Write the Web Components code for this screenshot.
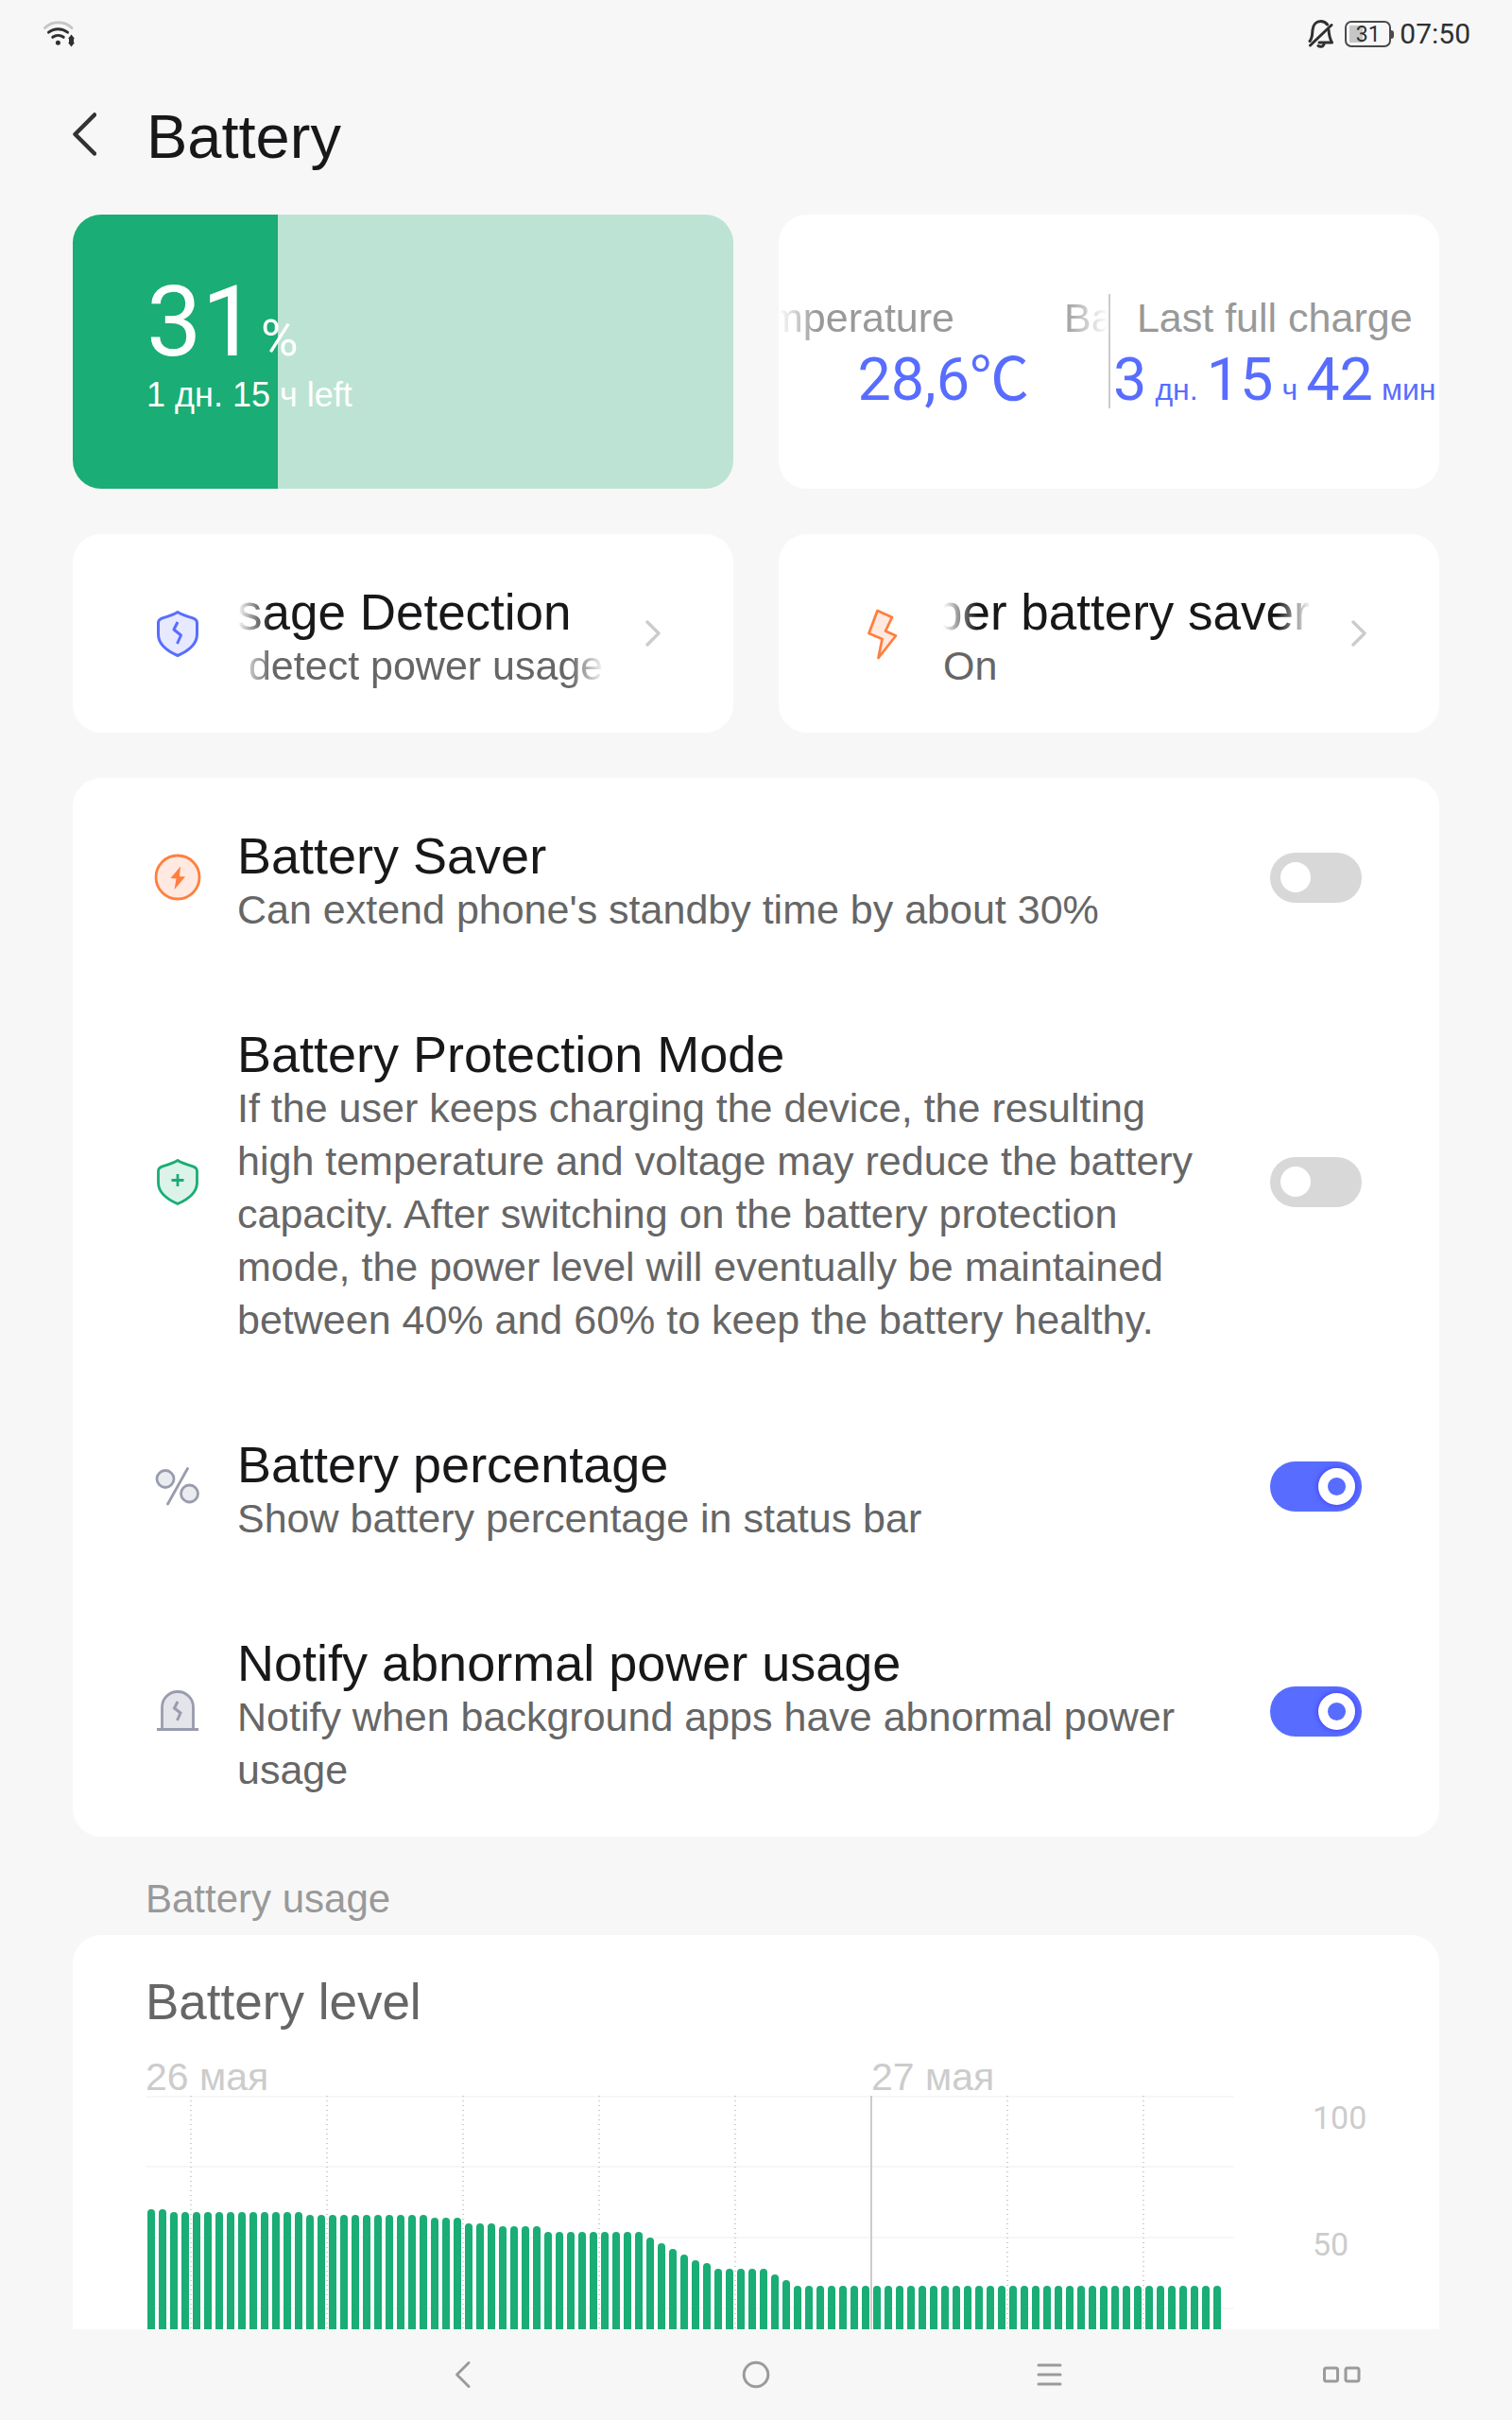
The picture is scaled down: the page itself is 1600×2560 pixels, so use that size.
<!DOCTYPE html>
<html lang="en">
<head>
<meta charset="utf-8">
<title>Battery</title>
<style>
  html, body { margin: 0; }
  body {
    background: #f7f7f7;
    color: #18181a;
    font-family: "Liberation Sans", "Noto Sans CJK SC", sans-serif;
  }
</style>
</head>
<body>
<battery-page></battery-page>
<script>
const define = (name, html, setup) => {
  const template = document.createElement('template');
  template.innerHTML = html;
  customElements.define(name, class extends HTMLElement {
    constructor() {
      super();
      this.attachShadow({ mode: 'open' }).append(template.content.cloneNode(true));
    }
    connectedCallback() {
      if (setup && !this.ready) { this.ready = true; setup(this, this.shadowRoot); }
    }
  });
};

const SHIELD = 'M28 5.5c5 3.2 11 4.8 16 6.3 3 1 4.5 2.2 4.5 5V29c0 11-9 17.5-20.5 22.5C16.5 46.5 7.5 40 7.5 29V16.8c0-2.8 1.5-4 4.5-5C17 10.3 23 8.7 28 5.5z';
const ICONS = {
  'shield-blue': `<g stroke="#586dff" stroke-width="3" stroke-linejoin="round"><path fill="#e6e9ff" d="${SHIELD}"/><path fill="none" d="M28 16l-4 8 7.5 6-4 9"/></g>`,
  'bolt': '<path d="M21.5 4l15.500 7-7 14.5 11 5L22.5 54l4-20-14-6z" fill="#ffe9e0" stroke="#ff7f3f" stroke-width="2.8" stroke-linejoin="round"/>',
  'saver': '<circle cx="28" cy="28" r="23" fill="#ffe9e0" stroke="#ff7f3f" stroke-width="2.8"/><path fill="#ff7f3f" d="M31 16.500L20.500 29l6 .5-2 11.500L36 27.500l-6-.5z"/>',
  'shield-green': `<g stroke="#1aad75" stroke-width="2.8" stroke-linejoin="round"><path fill="#dcf3ea" d="${SHIELD}"/><path fill="none" d="M28 20v13M21.5 26.500h13"/></g>`,
  'percent': '<g fill="#ebecef" stroke="#999cae" stroke-width="2.8" stroke-linecap="round"><circle cx="15" cy="20.500" r="9"/><circle cx="40.500" cy="36" r="9"/><path d="M38.500 9.500L17.500 47"/></g>',
  'alarm': '<g fill="#e4e5ea" stroke="#999cae" stroke-width="2.8"><path d="M11.500 47V24a16.500 16.500 0 0 1 33 0v23"/><path stroke-width="3" d="M6 47.500h44"/><path fill="none" stroke-width="3" d="M28 18l-3.500 7 6.500 5-3.500 8"/></g>'
};

define('line-icon', `
  <style>:host { display: block; flex: none; width: 56px; height: 56px; } svg { display: block; }</style>
  <svg width="56" height="56" viewBox="0 0 56 56" aria-hidden="true"></svg>`,
  (el, root) => { root.querySelector('svg').innerHTML = ICONS[el.getAttribute('name')]; });

define('status-bar', `
  <style>
    :host { display: flex; align-items: center; justify-content: space-between; height: 44px; padding: 14px 44px; color: #303030; font-family: Roboto, sans-serif; }
    .right { display: flex; align-items: center; gap: 6px; font-size: 30px; line-height: 32px; }
    .pill { display: flex; align-items: center; }
    .cell { box-sizing: border-box; width: 49px; height: 28px; border: 2px solid #4a4a4a; border-radius: 7px; text-align: center; font-size: 23px; line-height: 26px;
      background: linear-gradient(#c6c6c6, #c6c6c6) 3px center / 14px 18px no-repeat; }
    .tip { width: 3px; height: 9px; background: #4a4a4a; border-radius: 0 3px 3px 0; }
    .bell { margin-right: 6px; }
    svg { display: block; }
  </style>
  <svg width="36" height="28" viewBox="0 0 36 28" fill="none" stroke-width="3" stroke-linecap="round" aria-label="Wi-Fi">
    <g transform="translate(2 0)">
      <path stroke="#c6c6c6" d="M1.5 7.5A20.5 20.5 0 0 1 30 7.5"/>
      <path stroke="#303030" d="M5.5 12.2A16 16 0 0 1 25.500 12.2"/>
      <path stroke="#303030" d="M9.8 17.3A9.5 9.5 0 0 1 21.2 17.3"/>
      <circle cx="15.4" cy="23.2" r="2.5" fill="#303030"/>
      <path fill="#303030" d="M29.500 14.500l3.500 4.500h-1v4h1l-3.500 4.500-3.500-4.500h1v-4h-1z"/>
    </g>
  </svg>
  <div class="right">
    <svg class="bell" width="27" height="30" viewBox="0 0 27 30" fill="none" stroke="#303030" stroke-width="3" stroke-linecap="round" stroke-linejoin="round">
      <path d="M2 22.500C5 19 4.500 15 5 10.500C5.500 5 9 1.500 13.500 1.500C16.500 1.500 19 2.800 20.600 5M22 10.500c.3 5 1 9 3.500 13.500H12"/>
      <path d="M2.500 27L25 5.500"/><path d="M11 27.500c2 1.500 5 1 6-1.500"/>
    </svg>
    <div class="pill"><div class="cell">31</div><div class="tip"></div></div>
    <time>07:50</time>
  </div>`);

define('page-header', `
  <style>
    :host { display: flex; align-items: center; gap: 53px; height: 146px; padding: 0 77px 9px; }
    button { border: 0; padding: 0 0 6px; background: none; display: block; }
    svg { display: block; }
    h1 { margin: 0; font-size: 65px; line-height: 76px; font-weight: 400; }
  </style>
  <button aria-label="Back"><svg width="25" height="46" viewBox="0 0 25 46" fill="none" stroke="#333336" stroke-width="4.5" stroke-linecap="round" stroke-linejoin="round"><path d="M23 2.500L2.500 23 23 43.500"/></svg></button>
  <h1><slot></slot></h1>`);

define('level-card', `
  <style>
    :host { display: block; box-sizing: border-box; height: 290px; padding: 62px 78px 0; border-radius: 30px; color: #fff;
      background: linear-gradient(90deg, #1aad75 31%, #bde3d5 31%); }
    .row { display: flex; align-items: baseline; gap: 4px; font-family: Roboto, sans-serif; }
    .num { font-size: 104px; line-height: 104px; }
    .unit { font-size: 54px; line-height: 54px; }
    .left { font-size: 36px; line-height: 50px; }
  </style>
  <div class="row"><span class="num">31</span><span class="unit">%</span></div>
  <div class="left">1 дн. 15 ч left</div>`);

define('stats-card', `
  <style>
    :host { display: grid; grid-template-columns: 1fr 2px 1fr; align-items: start; box-sizing: border-box; height: 290px; padding-top: 84px; border-radius: 30px; background: #fff; overflow: hidden; }
    .col { min-width: 0; }
    .rule { height: 121px; background: #ccc; }
    .label { color: #999; font-size: 43px; line-height: 50px; text-align: center; white-space: nowrap; }
    .scroll { display: flex; gap: 116px; overflow: hidden; text-indent: -10px; -webkit-mask-image: linear-gradient(90deg, transparent, #000 40px, #000 calc(100% - 48px), transparent); }
    .scroll span + span { text-indent: 0; }
    .value { display: flex; justify-content: center; align-items: baseline; gap: 9px; margin-top: 4px; color: #586dff; font-size: 32px; line-height: 74px; white-space: nowrap; }
    .num { font-family: Roboto, "Noto Sans CJK SC", sans-serif; font-size: 63px; }
  </style>
  <div class="col">
    <div class="label scroll"><span>mperature</span><span>Ba</span></div>
    <div class="value"><span class="num">28,6℃</span></div>
  </div>
  <div class="rule"></div>
  <div class="col">
    <div class="label">Last full charge</div>
    <div class="value"><span class="num">3</span><span>дн.</span><span class="num">15</span><span>ч</span><span class="num">42</span><span>мин</span></div>
  </div>`);

define('link-card', `
  <style>
    :host { display: block; }
    a { display: flex; align-items: center; box-sizing: border-box; height: 210px; padding: 0 77px 0 83px; border-radius: 30px; background: #fff; color: inherit; text-decoration: none; }
    .text { flex: 1; min-width: 0; margin: 0 43px 0 35px; padding-top: 11px; }
    .title, .note { display: block; overflow: hidden; white-space: pre; }
    .title { font-size: 53px; line-height: 57px; padding-bottom: 4px; margin-bottom: -4px; }
    .note { color: #666; font-size: 43px; line-height: 56px; }
    .fade { -webkit-mask-image: linear-gradient(90deg, transparent, #000 36px, #000 calc(100% - 36px), transparent); }
    :host([scrolled]) .title { text-indent: -9px; }
    svg { display: block; }
  </style>
  <a href="#">
    <slot name="icon"></slot>
    <span class="text"><span class="title fade"><slot></slot></span><span class="note"></span></span>
    <svg width="16" height="28" viewBox="0 0 16 28" fill="none" stroke="#ccc" stroke-width="3.4" stroke-linecap="round" stroke-linejoin="round"><path d="M2 2l12 12L2 26"/></svg>
  </a>`,
  (el, root) => {
    const note = root.querySelector('.note');
    note.textContent = el.getAttribute('note');
    if (el.hasAttribute('long-note')) note.classList.add('fade');
  });

define('setting-row', `
  <style>
    :host { display: flex; align-items: center; padding: 0 82px 0 83px; }
    .text { flex: 1; margin: 0 64px 0 35px; padding: 54px 0 43px; }
    label { display: block; font-size: 54px; line-height: 57px; }
    p { margin: 0; color: #666; font-size: 43px; line-height: 56px; }
    input { appearance: none; flex: none; display: flex; align-items: center; box-sizing: border-box; width: 97px; height: 53px; margin: 0; padding: 0 11px; border-radius: 27px; background: #d8d8d8; }
    input::before { content: ""; width: 32px; height: 32px; border-radius: 50%; background: #fff; }
    input:checked { justify-content: flex-end; padding: 0 7px; background: #586dff; }
    input:checked::before { box-sizing: border-box; width: 39px; height: 39px; border: 10px solid #fff; background: #586dff; box-shadow: 0 0 6px #4033ff; }
  </style>
  <slot name="icon"></slot>
  <div class="text"><label for="toggle"></label><p id="note"><slot></slot></p></div>
  <input id="toggle" type="checkbox" role="switch" aria-describedby="note">`,
  (el, root) => {
    root.querySelector('label').textContent = el.getAttribute('heading');
    root.querySelector('input').checked = el.hasAttribute('on');
  });

define('level-chart', `
  <style>
    :host { display: block; padding: 42px 77px 60px; border-radius: 30px; background: #fff; }
    h2 { margin: 0 0 31px; color: #666; font-size: 53px; line-height: 57px; font-weight: 400; }
    .body { display: flex; gap: 83px; color: #ccc; }
    .plot { flex: 1; }
    .dates { display: grid; grid-template-columns: 2fr 1fr; font-size: 41px; line-height: 40px; }
    svg { display: block; width: 100%; height: 300px; }
    .axis { display: flex; flex-direction: column; gap: 94px; width: 57px; padding-top: 43px; font: 34px/40px Roboto, sans-serif; }
  </style>
  <h2>Battery level</h2>
  <div class="body">
    <div class="plot">
      <div class="dates"><span>26 мая</span><span>27 мая</span></div>
      <svg viewBox="0 0 1152 300" preserveAspectRatio="none" role="img" aria-label="Battery level"></svg>
    </div>
    <div class="axis"><span>100</span><span>50</span></div>
  </div>`,
  (el, root) => {
    // [level, number of samples]
    const runs = [[60,2],[59,12],[58,11],[57,3],[55,3],[54,4],[52,9],[50,1],[48,1],[46,1],[44,1],[42,1],[41,1],[39,5],[37,1],[35,1],[33,38]];
    const levels = runs.flatMap(([v, n]) => Array(n).fill(v));
    let s = '';
    for (let y = 0; y < 300; y += 75) s += `<rect y="${y ? y - 1 : 0}" width="1152" height="2" fill="#f7f7f7"/>`;
    for (let i = 0; i < 8; i++) {
      const x = 48 + i * 144;
      s += i === 5 ? `<path d="M${x} 0V300" stroke="#ccc" stroke-width="2"/>`
                   : `<path d="M${x} 0V300" stroke="#ccc" stroke-width="2" stroke-dasharray="1 4"/>`;
    }
    levels.forEach((v, i) => { s += `<rect x="${2 + i * 12}" y="${300 - v * 3}" width="8" height="${v * 3 + 10}" rx="4" fill="#1aad75"/>`; });
    root.querySelector('svg').innerHTML = s;
  });

define('nav-bar', `
  <style>
    :host { display: grid; grid-template-columns: repeat(4, 1fr); height: 96px; padding: 0 25px 0 335px; background: #f7f7f7; }
    button { border: 0; padding: 0; background: none; display: grid; place-items: center; }
    svg { display: block; fill: none; stroke: #9b9b9b; stroke-width: 3; stroke-linecap: round; stroke-linejoin: round; }
  </style>
  <button aria-label="Back"><svg width="42" height="32" viewBox="0 0 42 32"><path d="M27 3.500L14.500 16 27 28.500"/></svg></button>
  <button aria-label="Home"><svg width="42" height="32" viewBox="0 0 42 32"><circle cx="21" cy="16" r="12.800"/></svg></button>
  <button aria-label="Menu"><svg width="42" height="32" viewBox="0 0 42 32"><path d="M10 6h23M10 16h23M10 26h23"/></svg></button>
  <button aria-label="Split screen"><svg width="42" height="32" viewBox="0 0 42 32"><rect x="2.500" y="9" width="14" height="14" rx="2"/><rect x="25" y="9" width="14" height="14" rx="2"/></svg></button>`);

define('battery-page', `
  <style>
    :host { display: flex; flex-direction: column; height: 100vh; overflow: hidden; }
    main { flex: 1; min-height: 0; overflow-y: auto; scrollbar-width: none; padding: 0 77px; }
    .grid { display: grid; grid-template-columns: 1fr 1fr; gap: 48px; }
    .group { margin-top: 48px; border-radius: 30px; background: #fff; }
    h2 { margin: 42px 77px 14px; color: #999; font-size: 42px; line-height: 48px; font-weight: 400; }
    status-bar, page-header, nav-bar { flex: none; }
  </style>
  <status-bar></status-bar>
  <page-header>Battery</page-header>
  <main>
    <div class="grid">
      <level-card></level-card>
      <stats-card></stats-card>
      <link-card note=" detect power usage" long-note><line-icon slot="icon" name="shield-blue"></line-icon>sage Detection</link-card>
      <link-card note="On" scrolled><line-icon slot="icon" name="bolt"></line-icon>per battery saver</link-card>
    </div>
    <div class="group">
      <setting-row heading="Battery Saver"><line-icon slot="icon" name="saver"></line-icon>Can extend phone's standby time by about 30%</setting-row>
      <setting-row heading="Battery Protection Mode"><line-icon slot="icon" name="shield-green"></line-icon>If the user keeps charging the device, the resulting high temperature and voltage may reduce the battery capacity. After switching on the battery protection mode, the power level will eventually be maintained between 40% and 60% to keep the battery healthy.</setting-row>
      <setting-row heading="Battery percentage" on><line-icon slot="icon" name="percent"></line-icon>Show battery percentage in status bar</setting-row>
      <setting-row heading="Notify abnormal power usage" on><line-icon slot="icon" name="alarm"></line-icon>Notify when background apps have abnormal power usage</setting-row>
    </div>
    <h2>Battery usage</h2>
    <level-chart></level-chart>
  </main>
  <nav-bar></nav-bar>`);
</script>
</body>
</html>
